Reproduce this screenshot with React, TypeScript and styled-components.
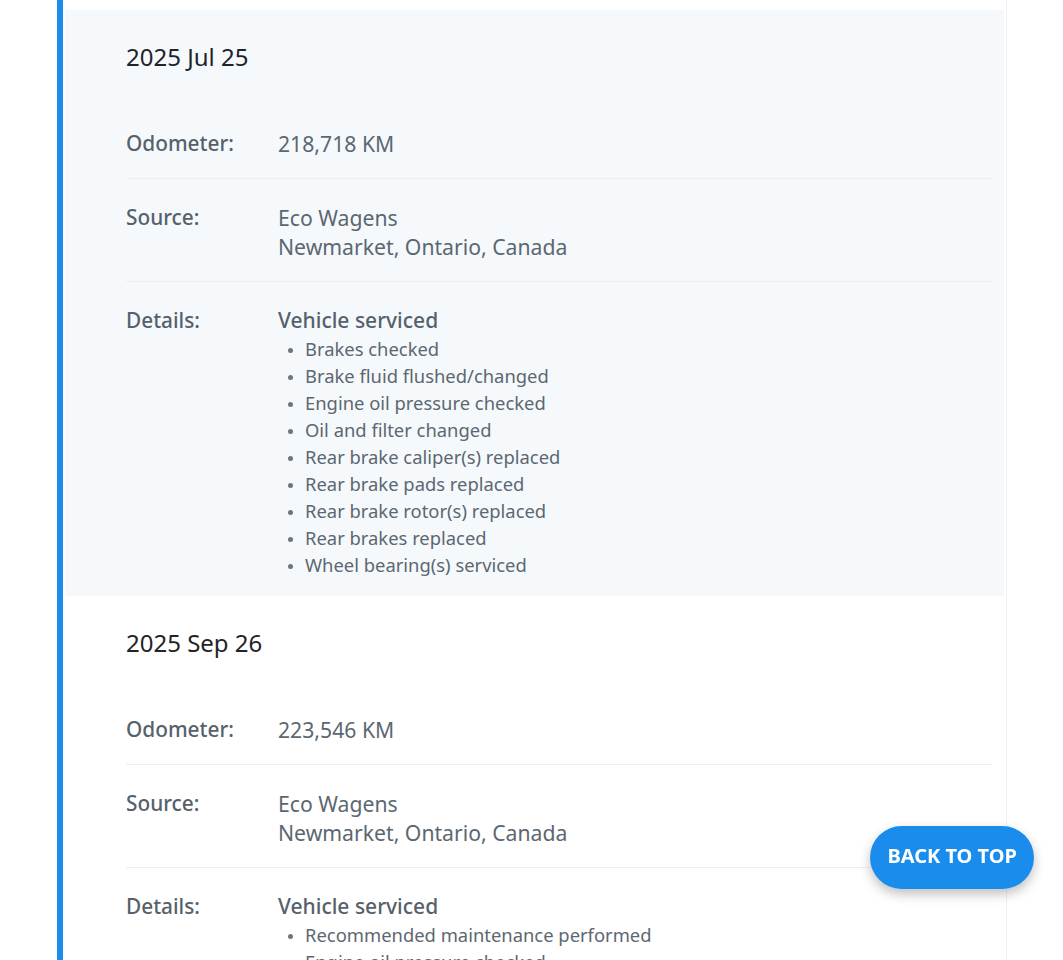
import React from "react";
import styled, { createGlobalStyle } from "styled-components";

const GlobalStyle = createGlobalStyle`
  html, body { margin: 0; padding: 0; background: #ffffff; }
  body { font-family: "Noto Sans", "Open Sans", sans-serif; overflow: hidden; }
  * { box-sizing: border-box; }
`;

const Page = styled.div`
  padding-left: 57px;
  width: 1007px;
  height: 960px;
  overflow: hidden;
`;

const Timeline = styled.div`
  border-left: 6px solid #1a8ceb;
  border-right: 1px solid #f0f2f4;
  padding: 10px 2px 0 2px;
  min-height: 960px;
`;

const Entry = styled.section<{ $shaded: boolean }>`
  background: ${(p) => (p.$shaded ? "#f5f9fc" : "#ffffff")};
  padding: 29px 12px 18px 61px;
`;

const DateTitle = styled.h3`
  margin: 0 0 30px 0;
  font-size: 24px;
  line-height: 36px;
  font-weight: 400;
  color: #1f2429;
`;

const Row = styled.div<{ $last?: boolean }>`
  display: grid;
  grid-template-columns: 152px 1fr;
  padding: ${(p) => (p.$last ? "24px 0 0 0" : "24px 0 20px 0")};
  border-bottom: ${(p) => (p.$last ? "none" : "1px solid #eceff2")};
`;

const Label = styled.div`
  font-size: 20.8px;
  line-height: 29px;
  font-weight: 500;
  color: #56616c;
`;

const Value = styled.div`
  font-size: 21.2px;
  line-height: 29px;
  font-weight: 400;
  color: #5c6771;
`;

const Heading = styled.div`
  font-size: 21px;
  line-height: 29px;
  font-weight: 500;
  color: #56616c;
`;

const List = styled.ul`
  margin: 0;
  padding: 0 0 0 27px;
  list-style: disc;
  color: #5c6771;
  font-size: 18.4px;
  line-height: 27px;
  li::marker {
    font-size: 14px;
    color: #6c7680;
  }
`;

const BackToTop = styled.button`
  position: fixed;
  right: 29px;
  bottom: 71px;
  height: 63px;
  padding: 0 17px 4px 17px;
  border: none;
  border-radius: 32px;
  background: #1a8ceb;
  color: #ffffff;
  font-family: "Noto Sans", "Open Sans", sans-serif;
  font-size: 20px;
  font-weight: 700;
  box-shadow: 0 5px 12px rgba(0, 0, 0, 0.25);
  cursor: pointer;
`;

type ServiceRecord = {
  date: string;
  odometer: string;
  source: string[];
  heading: string;
  items: string[];
};

const records: ServiceRecord[] = [
  {
    date: "2025 Jul 25",
    odometer: "218,718 KM",
    source: ["Eco Wagens", "Newmarket, Ontario, Canada"],
    heading: "Vehicle serviced",
    items: [
      "Brakes checked",
      "Brake fluid flushed/changed",
      "Engine oil pressure checked",
      "Oil and filter changed",
      "Rear brake caliper(s) replaced",
      "Rear brake pads replaced",
      "Rear brake rotor(s) replaced",
      "Rear brakes replaced",
      "Wheel bearing(s) serviced",
    ],
  },
  {
    date: "2025 Sep 26",
    odometer: "223,546 KM",
    source: ["Eco Wagens", "Newmarket, Ontario, Canada"],
    heading: "Vehicle serviced",
    items: [
      "Recommended maintenance performed",
      "Engine oil pressure checked",
      "Oil and filter changed",
    ],
  },
];

export default function App() {
  return (
    <>
      <GlobalStyle />
      <Page>
        <Timeline>
          {records.map((r, i) => (
            <Entry key={r.date} $shaded={i % 2 === 0}>
              <DateTitle>{r.date}</DateTitle>
              <Row>
                <Label>Odometer:</Label>
                <Value>{r.odometer}</Value>
              </Row>
              <Row>
                <Label>Source:</Label>
                <Value>
                  {r.source.map((s) => (
                    <div key={s}>{s}</div>
                  ))}
                </Value>
              </Row>
              <Row $last>
                <Label>Details:</Label>
                <div>
                  <Heading>{r.heading}</Heading>
                  <List>
                    {r.items.map((it) => (
                      <li key={it}>{it}</li>
                    ))}
                  </List>
                </div>
              </Row>
            </Entry>
          ))}
        </Timeline>
      </Page>
      <BackToTop>BACK TO TOP</BackToTop>
    </>
  );
}
